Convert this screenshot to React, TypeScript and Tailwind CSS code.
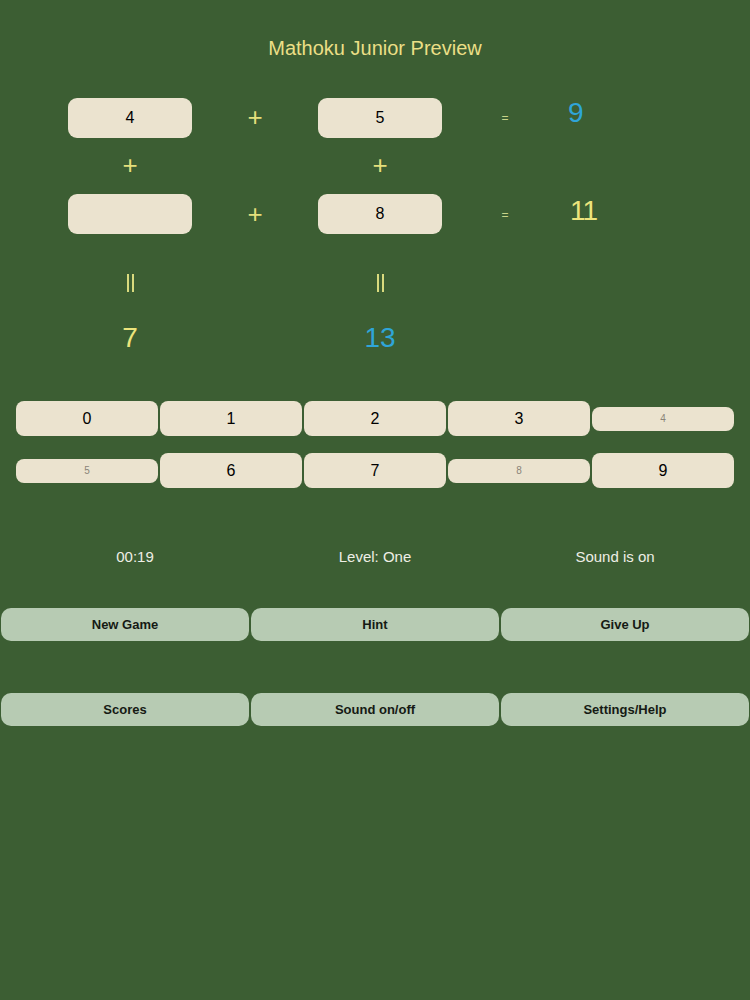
import React from "react";

const Tile = ({ value }: { value?: string }) => (
  <div className="w-[124px] h-10 rounded-[9px] bg-[#ebe3cf] flex items-center justify-center text-[16px] text-black">
    {value}
  </div>
);

const Plus = ({ w }: { w: string }) => (
  <div className={`${w} flex items-center justify-center text-[26px] leading-none text-[#e4df7c] -mt-[2px]`}>+</div>
);

const Eq = () => (
  <div className="w-[126px] flex items-center justify-center text-[12px] text-[#c8d48a]">=</div>
);

const Bars = () => (
  <div className="flex gap-[3px] h-[18px]">
    <div className="w-[2px] h-full bg-[#d9da7e]" />
    <div className="w-[2px] h-full bg-[#d9da7e]" />
  </div>
);

const pad: { n: string; small?: boolean }[][] = [
  [{ n: "0" }, { n: "1" }, { n: "2" }, { n: "3" }, { n: "4", small: true }],
  [{ n: "5", small: true }, { n: "6" }, { n: "7" }, { n: "8", small: true }, { n: "9" }],
];

const actions = [
  ["New Game", "Hint", "Give Up"],
  ["Scores", "Sound on/off", "Settings/Help"],
];

export default function App() {
  return (
    <div
      className="w-[750px] h-[1000px] bg-[#3c5e33] overflow-hidden"
      style={{ fontFamily: '"Liberation Sans", Arial, sans-serif' }}
    >
      <h1 className="pt-[36px] text-center text-[20px] leading-6 text-[#ebdf86]">Mathoku Junior Preview</h1>

      <div className="mt-[38px] pl-[68px]">
        <div className="flex h-10">
          <Tile value="4" />
          <Plus w="w-[126px]" />
          <Tile value="5" />
          <Eq />
          <div className="flex items-center text-[28px] leading-none text-[#2fa5d8] -mt-[10px]">9</div>
        </div>
        <div className="flex h-[56px]">
          <Plus w="w-[124px]" />
          <div className="w-[126px]" />
          <Plus w="w-[124px]" />
        </div>
        <div className="flex h-[41px]">
          <Tile />
          <Plus w="w-[126px]" />
          <Tile value="8" />
          <Eq />
          <div className="flex items-center text-[28px] leading-none text-[#ece47c] pl-[2px] -mt-[8px] tracking-[-1px]">11</div>
        </div>
        <div className="flex mt-[39px] h-[18px]">
          <div className="w-[124px] flex justify-center"><Bars /></div>
          <div className="w-[126px]" />
          <div className="w-[124px] flex justify-center"><Bars /></div>
        </div>
        <div className="flex mt-[30px] h-8 items-center">
          <div className="w-[124px] text-center text-[28px] leading-none text-[#ece47c]">7</div>
          <div className="w-[126px]" />
          <div className="w-[124px] text-center text-[28px] leading-none text-[#2fa5d8]">13</div>
        </div>
      </div>

      <div className="mt-[47px] pl-4 flex flex-col gap-[17px]">
        {pad.map((row, i) => (
          <div key={i} className="flex gap-[2px] h-[35px] items-center">
            {row.map((k) =>
              k.small ? (
                <div key={k.n} className="w-[142px] h-6 rounded-[8px] bg-[#ebe3cf] flex items-center justify-center text-[10px] text-[#8a8478]">
                  {k.n}
                </div>
              ) : (
                <div key={k.n} className="w-[142px] h-[35px] rounded-[8px] bg-[#ebe3cf] flex items-center justify-center text-[16px] text-black">
                  {k.n}
                </div>
              )
            )}
          </div>
        ))}
      </div>

      <div className="mt-[59px] px-[15px] flex text-[15px] leading-5 text-[#eeeee6]">
        <div className="w-[240px] text-center">00:19</div>
        <div className="w-[240px] text-center">Level: One</div>
        <div className="w-[240px] text-center">Sound is on</div>
      </div>

      <div className="mt-[41px] flex flex-col gap-[52px]">
        {actions.map((row, i) => (
          <div key={i} className="flex gap-[2px] pl-px">
            {row.map((label) => (
              <button
                key={label}
                className="w-[248px] h-[33px] rounded-[10px] bg-[#b7cbb3] text-[13px] font-bold text-[#151a14] flex items-center justify-center"
              >
                {label}
              </button>
            ))}
          </div>
        ))}
      </div>
    </div>
  );
}
